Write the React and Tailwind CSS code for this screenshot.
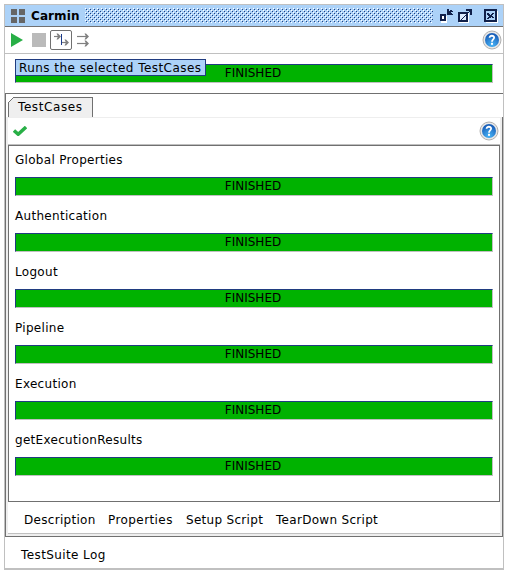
import React from "react";

const cases = [
  "Global Properties",
  "Authentication",
  "Logout",
  "Pipeline",
  "Execution",
  "getExecutionResults",
];

function Bar() {
  return (
    <div className="h-[19px] w-[478px] border border-t-[#203c80] border-l-[#203c80] border-r-[#c0c0c0] border-b-[#c0c0c0] bg-[#00b200] pr-[2px] text-center text-[12px] leading-[17px]">
      FINISHED
    </div>
  );
}

function Help() {
  return (
    <svg width="20" height="20" viewBox="0 0 20 20" className="shrink-0">
      <defs>
        <radialGradient id="help" cx="50%" cy="85%" r="75%">
          <stop offset="0" stopColor="#48b4f6" />
          <stop offset="1" stopColor="#1a60ba" />
        </radialGradient>
      </defs>
      <circle cx="10" cy="10" r="9" fill="#e8e8e8" stroke="#b0b0b0" />
      <circle cx="10" cy="10" r="7" fill="url(#help)" />
      <path d="M7.6 7.8C7.6 5 12.3 5.2 12.1 7.7C12 9.4 10 9.5 10 11.7" fill="none" stroke="#fff" strokeWidth="1.8" />
      <rect x="9" y="12.8" width="2" height="2" fill="#fff" />
    </svg>
  );
}

function TitleBar() {
  return (
    <div className="flex h-[22px] shrink-0 items-center border-b border-[#707070] bg-[#acd2f8] pl-[6px]">
      <svg width="14" height="15" shapeRendering="crispEdges" fill="#666">
        <path d="M0 1h6v6H0zM8 1h6v6H8zM0 9h6v6H0zM8 9h6v6H8z" />
      </svg>
      <span className="ml-[6px] w-[54px] text-[12px] font-bold leading-[20px] tracking-[0.1px]">Carmin</span>
      <svg width="348" height="15" shapeRendering="crispEdges">
        <defs>
          <pattern id="bumps" width="4" height="4" patternUnits="userSpaceOnUse">
            <path d="M0 0h1v1H0zM2 2h1v1H2z" fill="#fff" />
            <path d="M1 1h1v1H1zM3 3h1v1H3z" fill="#204080" />
          </pattern>
        </defs>
        <rect width="348" height="15" fill="url(#bumps)" />
      </svg>
      <svg width="62" height="15" className="ml-[6px] mt-[2px]" shapeRendering="crispEdges" fill="none">
        <path d="M2 7h6v7H2z" fill="#fff" />
        <path d="M2 6h4v5H2z" fill="#fff" stroke="#10204a" strokeWidth="2" />
        <path d="M8 0h2v2h1V1h2v1h1v1h-2v1h1v1h1v1H8z" fill="#10204a" />
        <path d="M20 4h10v10H20z" fill="#fff" />
        <path d="M20 4h8v8h-8z" fill="#dcecff" stroke="#10204a" strokeWidth="2" />
        <path d="M22 10h1V9h1V8h1V7h1V6h1V5h1V4h1V3h1V2h-3V0h6v6h-2V3h-1v1h-1v1h-1v1h-1v1h-1v1h-1v1h-1v1h-1v1h-2z" fill="#10204a" />
        <path d="M47 2h12v12H47z" fill="#fff" />
        <path d="M46 1h11v11H46z" fill="#acd2f8" stroke="#10204a" strokeWidth="2" />
        <path d="M48 4h2v1h1v1h1V5h1V4h2v1h-1v1h-1v1h1v1h1v1h-2V8h-1v1h-2v1h-2V9h1V8h1V7h-1V6h-1z" fill="#10204a" />
      </svg>
    </div>
  );
}

function MainToolbar() {
  return (
    <div className="flex h-[27px] shrink-0 items-center border-b border-[#c0c0c0] pl-[6px] pr-[1px]">
      <svg width="80" height="22" viewBox="0 0 80 22" fill="none">
        <path d="M0 4L12 11L0 18z" fill="#28af46" />
        <path d="M21 4h14v14H21z" fill="#bababa" />
        <rect x="39.5" y="1.5" width="21" height="19" rx="1.5" stroke="#707070" />
        <path d="M50.5 5v11" stroke="#1b3b8b" />
        <g stroke="#808080" strokeWidth="1.2">
          <path d="M43 7.5h5" />
          <path d="M51 13.5h5" />
          <path d="M66 7.5h9" />
          <path d="M66 14.5h9" />
        </g>
        <g fill="#808080">
          <path d="M45.5 4.500H47l3 3L47 10.500h-1.500l1.500-3z" />
          <path d="M53.5 10.500H55l3 3L55 16.500h-1.500l1.500-3z" />
          <path d="M73.500 4.500H75l3 3L75 10.500h-1.500l1.500-3z" />
          <path d="M73.500 11.500H75l3 3L75 17.500h-1.500l1.500-3z" />
        </g>
      </svg>
      <div className="ml-auto"><Help /></div>
    </div>
  );
}

export default function App() {
  return (
    <div className="h-[576px] w-[511px] overflow-hidden bg-white pl-[4px] pt-[4px] font-['DejaVu_Sans',sans-serif] text-[12px] text-black">
      <div className="flex h-[566px] w-[500px] flex-col border border-b-2 border-[#c0c0c0]">
        <TitleBar />
        <MainToolbar />
        <div className="relative h-[39px] shrink-0 pl-[10px] pt-[10px]">
          <Bar />
          <div className="absolute left-[10px] top-[5px] h-[17px] w-[191px] whitespace-nowrap border border-[#203c80] bg-[#acd2f8] pl-[3px] leading-[16px] tracking-[0.45px]">
            Runs the selected TestCases
          </div>
        </div>

        <div className="flex h-[444px] shrink-0 flex-col border-b border-l border-t border-[#707070]">
          <div className="flex h-[23px] shrink-0 items-end pl-[2px]">
            <div className="relative h-[20px] w-[85px] leading-[20px]">
              <svg width="85" height="20" className="absolute left-0 top-0" shapeRendering="crispEdges">
                <path d="M0.5 20V5.5L5.5 0.5H84.5V20" fill="#efefef" stroke="#707070" />
              </svg>
              <span className="relative ml-[10px] tracking-[0.6px]">TestCases</span>
            </div>
          </div>
          <div className="flex grow flex-col border-r border-[#707070] bg-[#eee] pb-[2px] pl-[2px] pr-[2px]">
            <div className="flex h-[28px] shrink-0 items-center border-b border-t border-b-[#c0c0c0] border-t-[#eee] bg-white pl-[5px] pr-[1px]">
              <svg width="14" height="10" viewBox="0 0 14 10">
                <path d="M1 4.5L5.2 8.3L13 1" fill="none" stroke="#28af46" strokeWidth="3.4" />
              </svg>
              <div className="ml-auto"><Help /></div>
            </div>
            <div className="h-[357px] shrink-0 border border-[#707070] bg-white pl-[6px] tracking-[0.3px]">
              {cases.map((name) => (
                <div key={name} className="flex h-[56px] flex-col">
                  <div className="h-[31px] leading-[28px]">{name}</div>
                  <div className="tracking-normal"><Bar /></div>
                </div>
              ))}
            </div>
            <div className="flex h-[32px] shrink-0 border-b border-[#c0c0c0] bg-white pl-[16px] leading-[36px] tracking-[0.3px]">
              <span className="w-[84px]">Description</span>
              <span className="w-[78px] tracking-[0.42px]">Properties</span>
              <span className="w-[90px] tracking-[0.3px]">Setup Script</span>
              <span>TearDown Script</span>
            </div>
          </div>
        </div>
        <div className="pl-[16px] leading-[36px] tracking-[0.4px]">TestSuite Log</div>
      </div>
    </div>
  );
}
